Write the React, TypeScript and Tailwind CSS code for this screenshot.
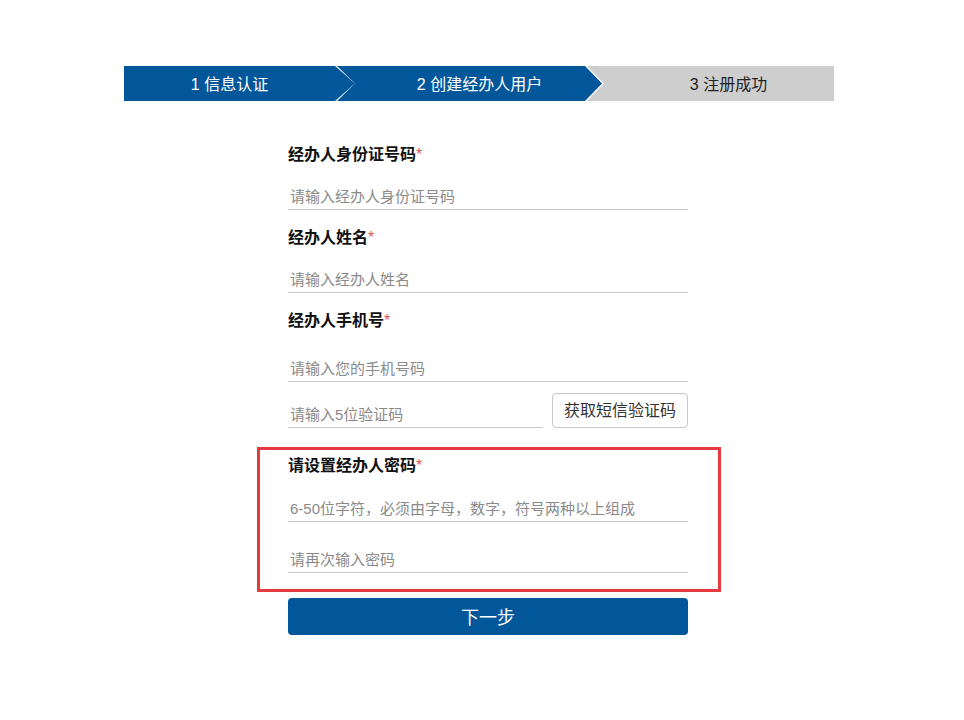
import React from "react";

const font = { fontFamily: '"Liberation Sans", "Noto Sans CJK SC", sans-serif' };

function Label({ text }: { text: string }) {
  return (
    <div className="h-5 text-[16px] font-bold leading-5 text-[#111]">
      {text}
      <span className="font-normal text-[#e0575b]">*</span>
    </div>
  );
}

function Field({ placeholder, className = "" }: { placeholder: string; className?: string }) {
  return (
    <input
      placeholder={placeholder}
      className={`block h-[34px] w-full border-b border-[#c8c8c8] bg-transparent pl-[2px] pt-[8px] text-[15px] text-[#333] outline-none placeholder:text-[#8a8a8a] ${className}`}
    />
  );
}

export default function App() {
  return (
    <div className="min-h-[720px] w-[964px] bg-white" style={font}>
      <div className="ml-[124px] w-[710px] pt-[66px]">
        {/* steps */}
        <div className="flex h-[35px] text-[16px]">
          <div className="flex w-[231px] shrink-0 items-center justify-center bg-[#02569a] pr-[20px] pt-[2px] text-white [clip-path:polygon(0_0,calc(100%-20px)_0,100%_50%,calc(100%-20px)_100%,0_100%)]">
            1 信息认证
          </div>
          <div className="-ml-[18px] flex w-[265px] shrink-0 items-center justify-center bg-[#02569a] pl-[20px] pt-[2px] text-white [clip-path:polygon(0_0,calc(100%-17px)_0,100%_50%,calc(100%-17px)_100%,0_100%,18px_50%)]">
            2 创建经办人用户
          </div>
          <div className="-ml-[15px] flex flex-1 items-center justify-center bg-[#cecece] pl-[36px] pt-[2px] text-[#222] [clip-path:polygon(0_0,100%_0,100%_100%,0_100%,17px_50%)]">
            3 注册成功
          </div>
        </div>

        {/* form */}
        <div className="ml-[164px] w-[400px] pt-[44px]">
          <Label text="经办人身份证号码" />
          <Field placeholder="请输入经办人身份证号码" className="mt-[11px]" />
          <div className="mt-[18px]">
            <Label text="经办人姓名" />
          </div>
          <Field placeholder="请输入经办人姓名" className="mt-[11px]" />
          <div className="mt-[18px]">
            <Label text="经办人手机号" />
          </div>
          <Field placeholder="请输入您的手机号码" className="mt-[17px]" />
          <div className="mt-[10px] flex items-end justify-between">
            <div className="w-[255px]">
              <Field placeholder="请输入5位验证码" className="h-[36px] pt-[10px]" />
            </div>
            <button className="h-[35px] w-[136px] rounded-[4px] border border-[#c8c8c8] bg-white text-[16px] text-[#333]">
              获取短信验证码
            </button>
          </div>
        </div>

        {/* password block, outlined */}
        <div className="ml-[133px] mt-[19px] w-[464px] border-[3px] border-[#e53a3f] pb-[16px] pl-[28px] pt-[6px]">
          <div className="w-[400px]">
            <Label text="请设置经办人密码" />
            <Field placeholder="6-50位字符，必须由字母，数字，符号两种以上组成" className="mt-[12px]" />
            <Field placeholder="请再次输入密码" className="mt-[17px]" />
          </div>
        </div>

        <button className="ml-[164px] mt-[6px] block h-[37px] w-[400px] rounded-[4px] bg-[#02569a] pt-[3px] text-[18px] text-white">
          下一步
        </button>
      </div>
    </div>
  );
}
